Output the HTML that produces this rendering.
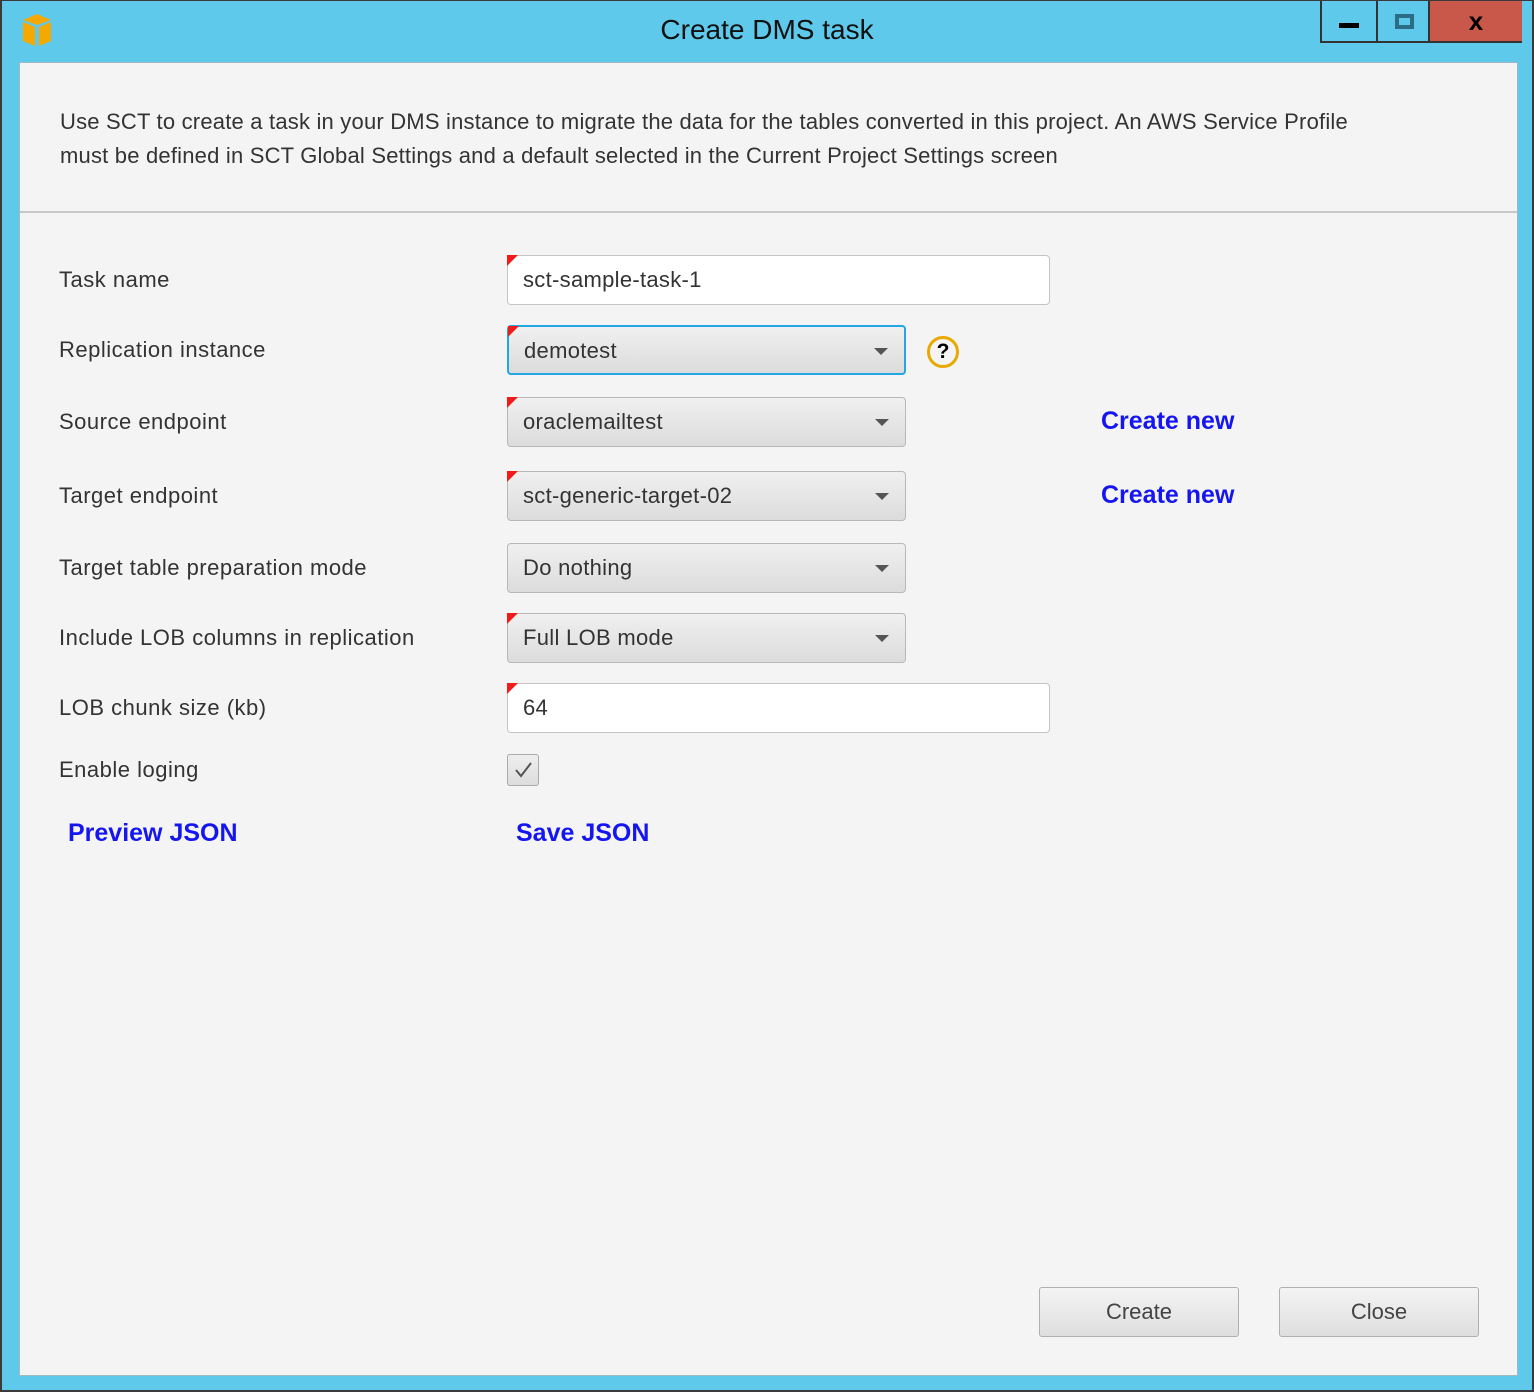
<!DOCTYPE html>
<html><head><style>
*{box-sizing:border-box;margin:0;padding:0}
body{width:1534px;height:1392px;background:#5ec9ea;position:relative;overflow:hidden;font-family:"Liberation Sans",sans-serif;color:#333}
.frame{position:absolute;left:0;top:0;width:1534px;height:1392px;border:2px solid #3a3a3a;border-top:1px solid #3a3a3a}
.title{position:absolute;top:14px;left:0;width:1534px;text-align:center;font-size:28px;color:#111}
.client{position:absolute;left:19px;top:62px;width:1499px;height:1314px;background:#f4f4f4;border:1px solid #9fb9c4}
.hdr{position:absolute;left:0;top:0;width:100%;height:150px;border-bottom:2px solid #c8c8c8;background:#f4f4f4}
.hdr p{position:absolute;left:40px;top:42px;font-size:22px;line-height:34px;color:#333;width:1340px;letter-spacing:0.2px}
.lbl{position:absolute;left:39px;font-size:22px;color:#333;letter-spacing:0.5px}
.box{position:absolute;left:487px;height:50px;border:1px solid #c4c4c4;border-radius:4px;font-size:22px;padding-left:15px;line-height:48px;color:#333;letter-spacing:0.3px}
.in{background:#fff;width:543px}
.dd{width:399px;background:linear-gradient(#f0f0f0,#dcdcdc);border-color:#b8b8b8}
.dd:after{content:"";position:absolute;right:16px;top:21px;border-left:7px solid transparent;border-right:7px solid transparent;border-top:7px solid #555}
.red:before{content:"";position:absolute;left:-1px;top:-1px;border-top:11px solid #f01c1c;border-right:11px solid transparent}
.link{position:absolute;color:#1515f0;font-weight:bold;font-size:25px}
.btn{position:absolute;top:1224px;width:200px;height:50px;border:1px solid #b0b0b0;border-radius:3px;background:linear-gradient(#f4f4f4,#dedede);text-align:center;line-height:48px;font-size:22px;color:#444}
</style></head><body>
<div class="frame"></div>
<svg style="position:absolute;left:20px;top:13px" width="36" height="34" viewBox="0 0 36 34"><path d="M3 7 L17 1 L31 7 L17 12Z" fill="#f5a800"/><path d="M3 9 L15 14 L15 33 L3 28Z" fill="#f5a800"/><path d="M19 14 L31 9 L31 28 L19 33Z" fill="#f5a800"/></svg>
<div class="title">Create DMS task</div>
<div style="position:absolute;left:1320px;top:1px;width:202px;height:42px;border:2px solid #333;border-top:none">
 <div style="position:absolute;left:0;top:0;width:56px;height:40px;border-right:2px solid #333"><div style="position:absolute;left:17px;top:22px;width:20px;height:5px;background:#000"></div></div>
 <div style="position:absolute;left:56px;top:0;width:52px;height:40px;border-right:2px solid #333"><div style="position:absolute;left:17px;top:13px;width:19px;height:15px;border:4px solid #2c6d86"></div></div>
 <div style="position:absolute;left:108px;top:0;width:92px;height:40px;background:#c9574a;text-align:center;font-weight:bold;font-size:26px;line-height:40px;color:#000">x</div>
</div>
<div class="client">
 <div class="hdr"><p>Use SCT to create a task in your DMS instance to migrate the data for the tables converted in this project. An AWS Service Profile must be defined in SCT Global Settings and a default selected in the Current Project Settings screen</p></div>
 <div class="lbl" style="top:204px">Task name</div>
 <div class="box in red" style="top:192px">sct-sample-task-1</div>
 <div class="lbl" style="top:274px">Replication instance</div>
 <div class="box dd red" style="top:262px;border:2px solid #22a7e0">demotest</div>
 <div style="position:absolute;left:907px;top:273px;width:32px;height:32px;border:3px solid #e8a900;border-radius:50%;text-align:center;font-weight:bold;font-size:21px;line-height:26px;color:#000">?</div>
 <div class="lbl" style="top:346px">Source endpoint</div>
 <div class="box dd red" style="top:334px">oraclemailtest</div>
 <div class="link" style="left:1081px;top:344px">Create new</div>
 <div class="lbl" style="top:420px">Target endpoint</div>
 <div class="box dd red" style="top:408px">sct-generic-target-02</div>
 <div class="link" style="left:1081px;top:418px">Create new</div>
 <div class="lbl" style="top:492px">Target table preparation mode</div>
 <div class="box dd" style="top:480px">Do nothing</div>
 <div class="lbl" style="top:562px">Include LOB columns in replication</div>
 <div class="box dd red" style="top:550px">Full LOB mode</div>
 <div class="lbl" style="top:632px">LOB chunk size (kb)</div>
 <div class="box in red" style="top:620px">64</div>
 <div class="lbl" style="top:694px">Enable loging</div>
 <div style="position:absolute;left:487px;top:691px;width:32px;height:32px;border:1px solid #aaa;border-radius:3px;background:linear-gradient(#eee,#ddd)"><svg width="30" height="30"><path d="M8 15 L13 21 L23 8" stroke="#555" stroke-width="2" fill="none"/></svg></div>
 <div class="link" style="left:48px;top:756px">Preview JSON</div>
 <div class="link" style="left:496px;top:756px">Save JSON</div>
 <div class="btn" style="left:1019px">Create</div>
 <div class="btn" style="left:1259px">Close</div>
</div>
</body></html>
